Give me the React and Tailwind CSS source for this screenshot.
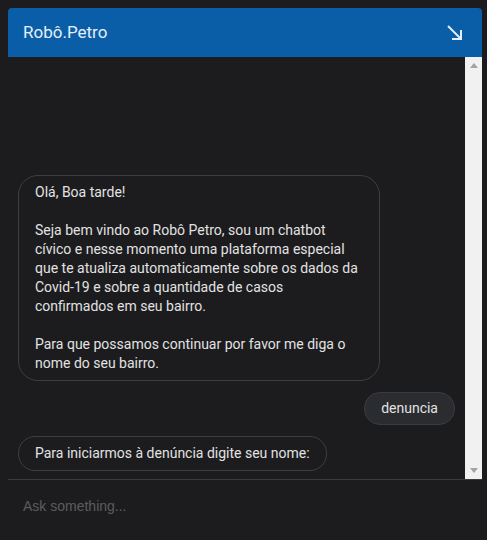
import React from "react";

export default function App() {
  return (
    <div className="w-[487px] h-[540px] bg-[#1c1c1e] pt-[8px] px-[8px]" style={{ fontFamily: "Roboto, 'Noto Sans', sans-serif" }}>
      <div className="w-[474px] flex flex-col">
        <div className="h-[49px] bg-[#0a5ea7] rounded-t-[4px] flex items-center justify-between pl-[15px] pr-[19px]">
          <span className="text-[17px] text-[#e6eef7]">Robô.Petro</span>
          <svg width="17" height="17" viewBox="0 0 17 17" fill="none" stroke="#e6eef7" strokeWidth="2">
            <path d="M2 2 L15 15" />
            <path d="M15 6 V15 H6" />
          </svg>
        </div>
        <div className="h-[422px] flex">
          <div className="flex-1 flex flex-col justify-end gap-[11px] pt-[10px] px-[10px] pb-[8px] text-[14px] leading-[19px] text-[#e2e2e2]">
            <div className="w-[362px] border border-[#3d3e40] rounded-[20px] px-[16px] py-[7px]">
              <p>Olá, Boa tarde!</p>
              <p>&nbsp;</p>
              <p>Seja bem vindo ao Robô Petro, sou um chatbot cívico e nesse momento uma plataforma especial que te atualiza automaticamente sobre os dados da Covid-19 e sobre a quantidade de casos confirmados em seu bairro.</p>
              <p>&nbsp;</p>
              <p>Para que possamos continuar por favor me diga o nome do seu bairro.</p>
            </div>
            <div className="self-end bg-[#2a2c2f] border border-[#3a3c3f] rounded-[16px] px-[16px] py-[6px]">denuncia</div>
            <div className="self-start border border-[#3d3e40] rounded-[17px] px-[16px] py-[7px]">Para iniciarmos à denúncia digite seu nome:</div>
          </div>
          <div className="w-[17px] bg-[#f1f1f1] flex flex-col items-center justify-between py-[6px]">
            <svg width="8" height="5" viewBox="0 0 8 5"><path d="M0 5 L4 0 L8 5 Z" fill="#a3a3a3" /></svg>
            <svg width="8" height="5" viewBox="0 0 8 5"><path d="M0 0 L8 0 L4 5 Z" fill="#a3a3a3" /></svg>
          </div>
        </div>
        <div className="border-t border-[#3a3b3d] h-[48px] flex items-center pl-[15px] pt-[5px]">
          <input
            className="bg-transparent outline-none text-[14px] text-[#ccc] placeholder-[#5c5c5c] w-full"
            style={{ fontFamily: "'Liberation Sans', Arial, sans-serif" }}
            placeholder="Ask something..."
          />
        </div>
      </div>
    </div>
  );
}
